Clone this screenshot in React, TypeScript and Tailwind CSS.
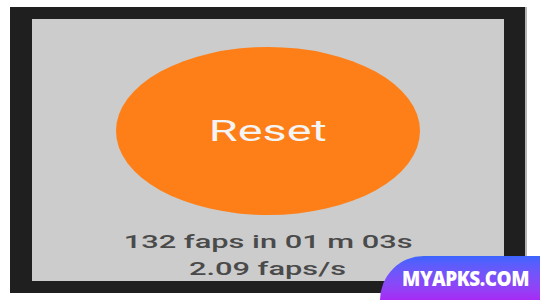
export default function App() {
  return (
    <div className="relative h-[300px] w-[540px] overflow-hidden bg-white">
      <div className="ml-[10px] mt-[7px] h-[286px] w-[517px] border-r-2 border-[#b5b5b5] bg-[#1f1f1f] pl-[22px] pt-[12px]">
        <div className="flex h-[262px] w-[472px] flex-col items-center bg-[#cccccc] pt-[28px] font-['Roboto',sans-serif]">
          <button className="flex h-[168px] w-[304px] shrink-0 items-center justify-center rounded-[50%] bg-[#fe7f17]">
            <span className="inline-block scale-x-[1.56] text-[30px] leading-none text-[#f4f4f4]">Reset</span>
          </button>
          <div className="mt-[13px] flex flex-col items-center text-[19px] font-medium leading-[27px] text-[#4a4a4a]">
            <span className="inline-block scale-x-[1.62] whitespace-nowrap">132 faps in 01 m 03s</span>
            <span className="inline-block scale-x-[1.62] whitespace-nowrap">2.09 faps/s</span>
          </div>
        </div>
      </div>
      <div className="absolute bottom-0 right-0 flex h-[44px] w-[160px] items-center justify-end rounded-tl-[46px] bg-gradient-to-b from-[#3b64fe] to-[#a62af4] pr-[11px]">
        <span className="inline-block origin-right scale-x-[0.9] font-['Open_Sans',sans-serif] text-[21px] font-extrabold leading-none tracking-[-0.5px] text-white">MYAPKS.COM</span>
      </div>
    </div>
  );
}
